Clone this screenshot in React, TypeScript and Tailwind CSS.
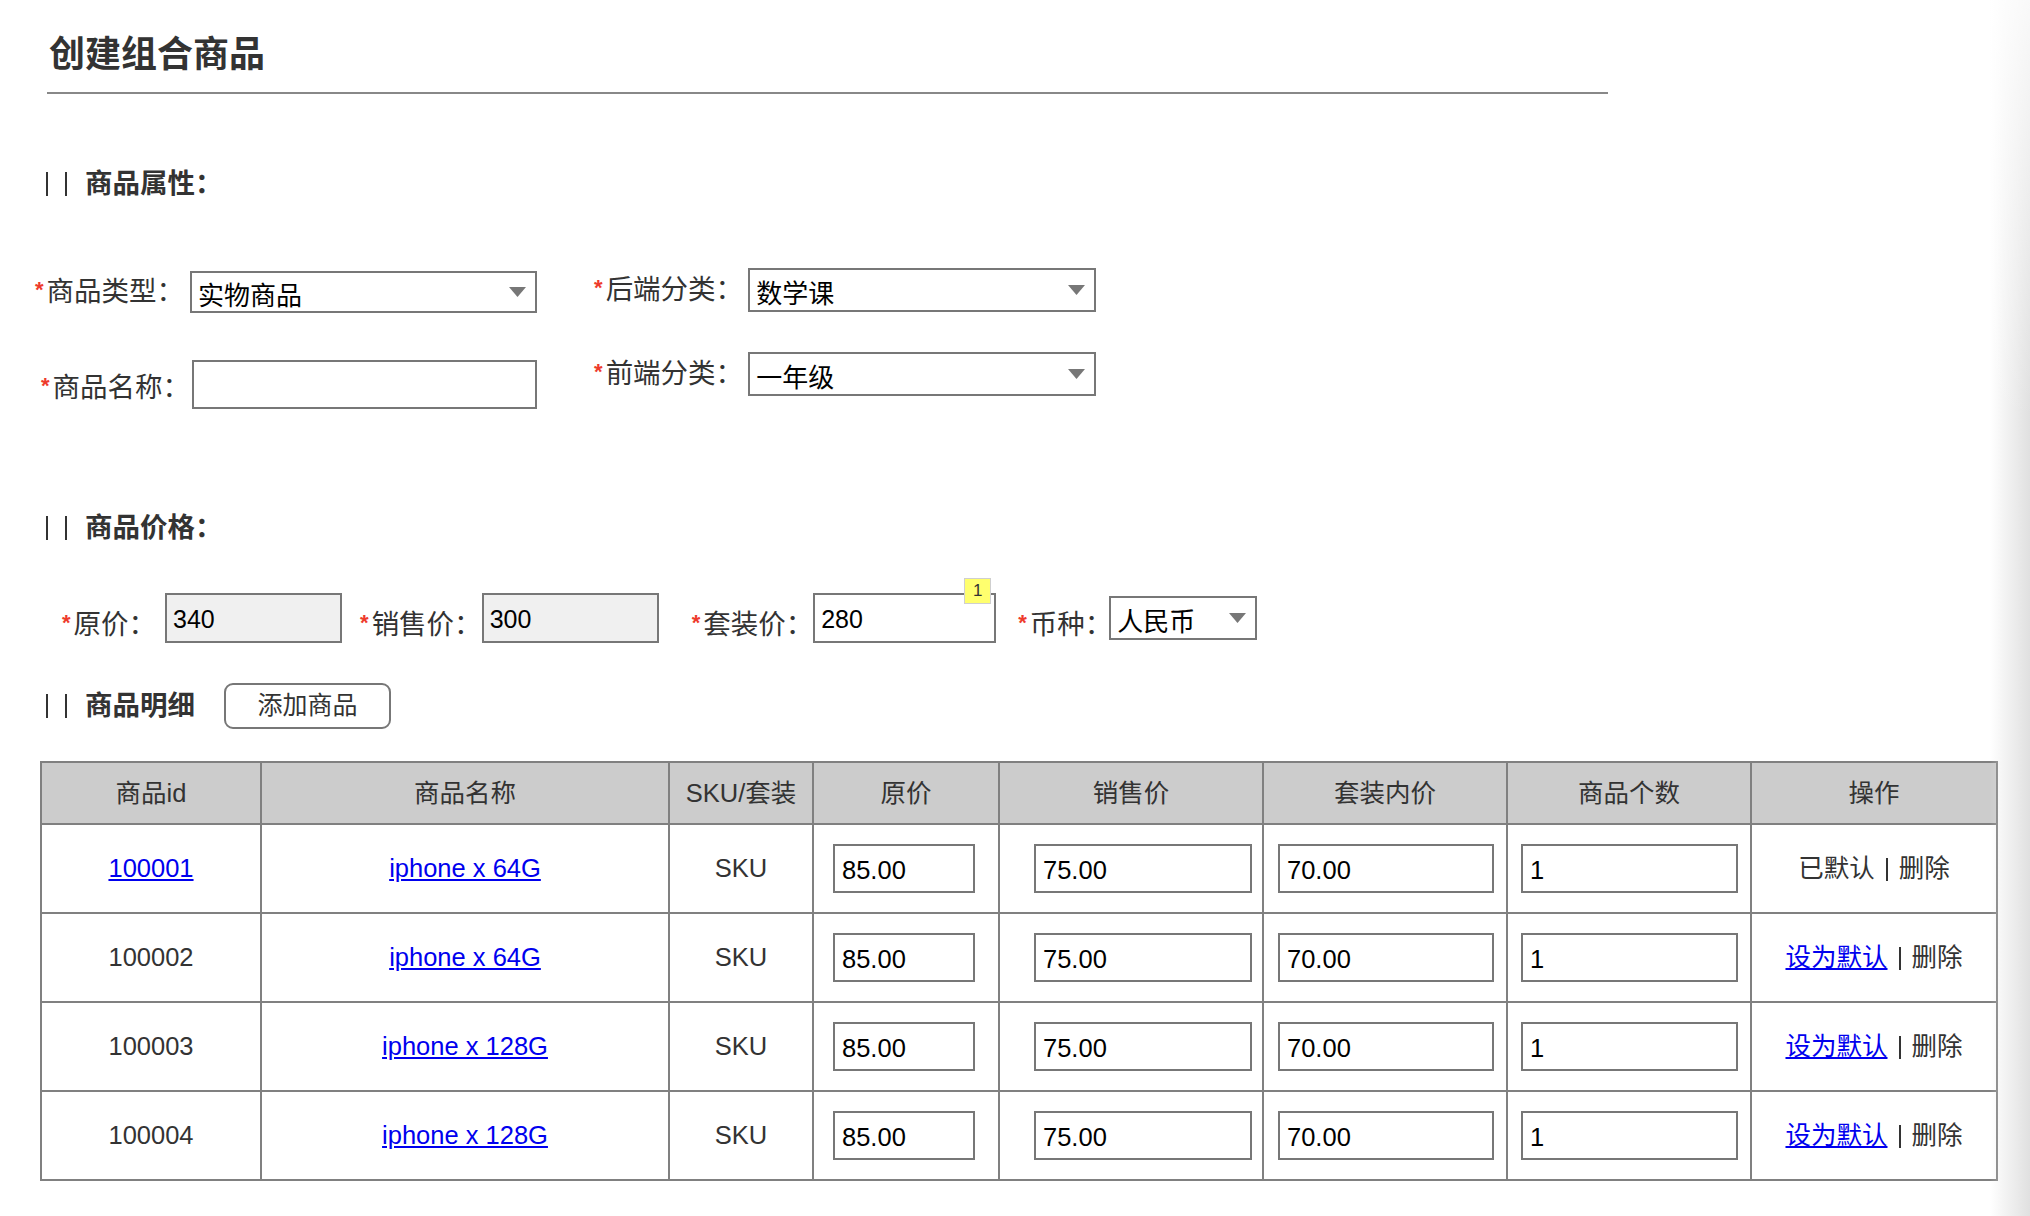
import React from 'react';

const rows = [
  { id: '100001', idLink: true, name: 'iphone x 64G', isDefault: true },
  { id: '100002', idLink: false, name: 'iphone x 64G', isDefault: false },
  { id: '100003', idLink: false, name: 'iphone x 128G', isDefault: false },
  { id: '100004', idLink: false, name: 'iphone x 128G', isDefault: false },
];

const headers = ['商品id', '商品名称', 'SKU/套装', '原价', '销售价', '套装内价', '商品个数', '操作'];

const Star = () => (
  <span className="align-top text-[22px] font-bold leading-[28px] text-[#ee3a2c]">*</span>
);

const Label = ({ text, className = '' }: { text: string; className?: string }) => (
  <span className={`whitespace-nowrap text-[27.5px] leading-[32px] text-[#333] ${className}`}>
    <Star />
    <span className="ml-[3px]">{text}</span>
  </span>
);

const Caret = () => (
  <svg width="17" height="10" viewBox="0 0 17 10" className="shrink-0">
    <path d="M0 0h17L8.5 10z" fill="#777" />
  </svg>
);

const FakeSelect = ({ value, className }: { value: string; className: string }) => (
  <div className={`flex items-center justify-between border-2 border-[#777] bg-white pl-[6px] pr-[9px] text-[26px] text-black ${className}`}>
    <span className="pt-[8px] leading-none">{value}</span>
    <Caret />
  </div>
);

const SectionTitle = ({ text }: { text: string }) => (
  <div className="flex h-[28px] items-center">
    <span className="h-[24px] w-[2px] bg-[#333]" />
    <span className="ml-[17px] h-[24px] w-[2px] bg-[#333]" />
    <span className="ml-[18px] whitespace-nowrap text-[27.5px] font-semibold leading-[28px] text-[#333]">{text}</span>
  </div>
);

const PriceInput = ({ value, grey, className }: { value: string; grey?: boolean; className: string }) => (
  <input
    readOnly
    value={value}
    className={`h-[50px] border-2 border-[#777] pl-[6px] pt-[3px] text-[25px] text-black outline-none ${grey ? 'bg-[#f0f0f0]' : 'bg-white'} ${className}`}
  />
);

const CellInput = ({ value, className }: { value: string; className: string }) => (
  <input
    readOnly
    value={value}
    className={`h-[49px] border-2 border-[#777] bg-white pl-[7px] pt-[3px] text-[25.5px] text-black outline-none ${className}`}
  />
);

export default function App() {
  return (
    <div className="relative h-[1216px] w-full overflow-hidden bg-white font-['Liberation_Sans','Noto_Sans_CJK_SC',sans-serif] text-[#333]">
      {/* title */}
      <div className="ml-[47px] w-[1561px] border-b-2 border-[#888] pb-[20px] pl-[2px] pt-[37px]">
        <h1 className="text-[36px] font-bold leading-[35px] text-[#333]">创建组合商品</h1>
      </div>

      {/* 商品属性 */}
      <div className="ml-[46px] mt-[76px]">
        <SectionTitle text="商品属性：" />
      </div>

      <div className="mt-[70px] flex items-start">
        <div className="ml-[35px] flex flex-col">
          <div className="mt-[3px] flex h-[42px] items-center">
            <Label text="商品类型：" />
            <FakeSelect value="实物商品" className="ml-[6px] h-[42px] w-[347px]" />
          </div>
          <div className="mt-[47px] flex h-[49px] items-center pl-[6px]">
            <Label text="商品名称：" className="pt-[6px]" />
            <input readOnly value="" className="ml-[2px] h-[49px] w-[345px] border-2 border-[#777] bg-white outline-none" />
          </div>
        </div>
        <div className="ml-[57px] flex flex-col">
          <div className="flex h-[44px] items-center">
            <Label text="后端分类：" />
            <FakeSelect value="数学课" className="ml-[5px] h-[44px] w-[348px]" />
          </div>
          <div className="mt-[40px] flex h-[44px] items-center">
            <Label text="前端分类：" />
            <FakeSelect value="一年级" className="ml-[5px] h-[44px] w-[348px]" />
          </div>
        </div>
      </div>

      {/* 商品价格 */}
      <div className="ml-[46px] mt-[105px]">
        <SectionTitle text="商品价格：" />
      </div>

      <div className="ml-[62px] mt-[50px] flex h-[51px] items-center">
        <Label text="原价：" className="pt-[14px]" />
        <PriceInput value="340" grey className="ml-[9px] w-[177px]" />
        <Label text="销售价：" className="ml-[18px] pt-[14px]" />
        <PriceInput value="300" grey className="w-[177px]" />
        <Label text="套装价：" className="ml-[33px] pt-[14px]" />
        <div className="relative">
          <PriceInput value="280" className="w-[183px]" />
          <span className="absolute right-[5px] top-[-15px] flex h-[26px] w-[27px] items-center justify-center border border-[#cfcfcf] bg-[#ffff6e] text-[17px] leading-none text-[#333]">
            1
          </span>
        </div>
        <Label text="币种：" className="ml-[22px] pt-[14px]" />
        <FakeSelect value="人民币" className="ml-[-3px] h-[44px] w-[148px]" />
      </div>

      {/* 商品明细 */}
      <div className="ml-[46px] mt-[40px] flex h-[46px] items-center">
        <SectionTitle text="商品明细" />
        <button className="ml-[29px] h-[46px] w-[167px] rounded-[9px] border-2 border-[#777] bg-white text-[25px] text-[#333]">
          添加商品
        </button>
      </div>

      <table className="ml-[40px] mt-[32px] w-[1956px] table-fixed border-collapse text-[25.5px] text-[#333]">
        <colgroup>
          <col className="w-[220px]" />
          <col className="w-[408px]" />
          <col className="w-[144px]" />
          <col className="w-[186px]" />
          <col className="w-[264px]" />
          <col className="w-[244px]" />
          <col className="w-[244px]" />
          <col className="w-[246px]" />
        </colgroup>
        <thead>
          <tr className="h-[62px] bg-[#cccccc]">
            {headers.map((h) => (
              <th key={h} className="border-2 border-[#808080] text-center font-normal">
                {h}
              </th>
            ))}
          </tr>
        </thead>
        <tbody>
          {rows.map((r) => (
            <tr key={r.id} className="h-[89px]">
              <td className="border-2 border-[#808080] text-center">
                {r.idLink ? <a className="text-[#0000ee] underline">{r.id}</a> : r.id}
              </td>
              <td className="border-2 border-[#808080] text-center">
                <a className="text-[#0000ee] underline">{r.name}</a>
              </td>
              <td className="border-2 border-[#808080] text-center">SKU</td>
              <td className="border-2 border-[#808080] pl-[19px] text-left">
                <CellInput value="85.00" className="w-[142px]" />
              </td>
              <td className="border-2 border-[#808080] pl-[34px] text-left">
                <CellInput value="75.00" className="w-[218px]" />
              </td>
              <td className="border-2 border-[#808080] pl-[14px] text-left">
                <CellInput value="70.00" className="w-[216px]" />
              </td>
              <td className="border-2 border-[#808080] pl-[13px] text-left">
                <CellInput value="1" className="w-[217px]" />
              </td>
              <td className="border-2 border-[#808080] text-center">
                {r.isDefault ? <span>已默认</span> : <a className="text-[#0000ee] underline">设为默认</a>}
                <span className="mx-[11px] inline-block h-[23px] w-[2px] bg-[#333] align-[-4px]" />
                <span>删除</span>
              </td>
            </tr>
          ))}
        </tbody>
      </table>

      {/* right edge shadow */}
      <div className="pointer-events-none absolute right-0 top-0 h-full w-[40px] bg-linear-to-r from-[#ffffff00] to-[#e0e0e0]" />
      <div className="pointer-events-none absolute right-0 top-0 h-[420px] w-[40px] bg-linear-to-b from-[#ffffffcc] to-[#ffffff00]" />
    </div>
  );
}
